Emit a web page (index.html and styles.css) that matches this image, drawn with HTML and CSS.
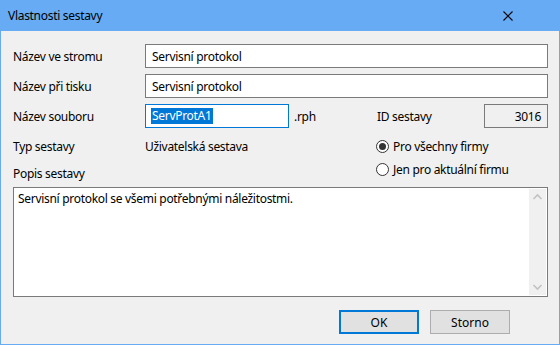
FILE: index.html
```html
<!DOCTYPE html>
<html lang="cs">
<head>
<meta charset="utf-8">
<title>Vlastnosti sestavy</title>
<link rel="stylesheet" href="styles.css">
</head>
<body>
<div class="window">
  <div class="titlebar">
    <span class="title">Vlastnosti sestavy</span>
    <svg class="close" width="12" height="12" viewBox="0 0 12 12"><path d="M1.5 1.5 L10.5 10.5 M10.5 1.5 L1.5 10.5" stroke="#000" stroke-width="1.1" fill="none"/></svg>
  </div>
  <div class="content">
    <div class="row">
      <span class="label">Název ve stromu</span>
      <div class="field wide">Servisní protokol</div>
    </div>
    <div class="row">
      <span class="label">Název při tisku</span>
      <div class="field wide">Servisní protokol</div>
    </div>
    <div class="row">
      <span class="label">Název souboru</span>
      <div class="field file focused"><span class="sel">ServProtA1</span></div>
      <span class="ext">.rph</span>
      <span class="idlabel">ID sestavy</span>
      <div class="idbox">3016</div>
    </div>
    <div class="lower">
      <span class="label">Typ sestavy</span>
      <span class="value">Uživatelská sestava</span>
      <label class="radio"><span class="circle checked"></span>Pro všechny firmy</label>
      <span class="label popis">Popis sestavy</span>
      <span></span>
      <label class="radio"><span class="circle"></span>Jen pro aktuální firmu</label>
    </div>
    <div class="memo">
      <div class="memo-text">Servisní protokol se všemi potřebnými náležitostmi.</div>
      <div class="scrollbar">
        <svg width="17" height="17" viewBox="0 0 17 17"><path d="M4.5 10 L8.5 6 L12.5 10" stroke="#c2c2c2" stroke-width="1.6" fill="none"/></svg>
        <svg width="17" height="17" viewBox="0 0 17 17"><path d="M4.5 7 L8.5 11 L12.5 7" stroke="#c2c2c2" stroke-width="1.6" fill="none"/></svg>
      </div>
    </div>
    <div class="buttons">
      <button class="btn default">OK</button>
      <button class="btn">Storno</button>
    </div>
  </div>
</div>
</body>
</html>
```

FILE: styles.css
```css
* { box-sizing: border-box; }
html, body { margin: 0; padding: 0; }
body {
  font-family: "Noto Sans", "Open Sans", sans-serif;
  font-size: 12px;
  letter-spacing: -0.3px;
  color: #000;
  background: #f0f0f0;
}
.window {
  width: 560px;
  height: 345px;
  border: 1px solid #67abf5;
  border-top: none;
  background: #f0f0f0;
  display: flex;
  flex-direction: column;
}
.titlebar {
  height: 31px;
  margin: 0 -1px;
  background: #67abf5;
  display: flex;
  align-items: center;
  justify-content: space-between;
  padding: 0 46px 0 8px;
}
.title { font-size: 12px; }
.close { display: block; }
.content {
  flex: 1;
  padding: 13px 11px 0 12px;
  display: flex;
  flex-direction: column;
}
.row {
  display: flex;
  align-items: center;
  height: 24px;
  margin-bottom: 6px;
}
.label { width: 132px; flex: none; }
.field {
  height: 24px;
  border: 1px solid #7a7a7a;
  background: #fff;
  padding: 0 6px;
  display: flex;
  align-items: center;
  white-space: nowrap;
}
.field.wide { flex: 1; }
.field.file { width: 144px; flex: none; padding-left: 5px; }
.field.focused { border-color: #0078d7; }
.sel { background: #0078d7; color: #fff; padding: 0 1px; line-height: 16px; }
.ext { margin-left: 5px; width: 83px; }
.idlabel { flex: 1; }
.idbox {
  width: 64px;
  height: 24px;
  border: 1px solid #7a7a7a;
  background: #f0f0f0;
  display: flex;
  align-items: center;
  justify-content: flex-end;
  padding-right: 6px;
}
.lower {
  display: grid;
  grid-template-columns: 132px 231px 1fr;
  grid-template-rows: 20px 20px;
  row-gap: 3px;
  margin-top: 2px;
  align-items: center;
}
.popis { padding-top: 8px; }
.radio { display: flex; align-items: center; gap: 4px; }
.circle {
  width: 13px;
  height: 13px;
  border: 1px solid #333;
  border-radius: 50%;
  background: #fff;
  display: flex;
  align-items: center;
  justify-content: center;
}
.circle.checked::after {
  content: "";
  width: 7px;
  height: 7px;
  border-radius: 50%;
  background: #333;
}
.memo {
  margin-top: 8px;
  height: 110px;
  border: 1px solid #7a7a7a;
  background: #fff;
  display: flex;
}
.memo-text { flex: 1; padding: 2px 4px; }
.scrollbar {
  width: 17px;
  margin: 1px 1px 1px 0;
  background: #f0f0f0;
  display: flex;
  flex-direction: column;
  justify-content: space-between;
}
.scrollbar svg { display: block; }
.buttons {
  display: flex;
  justify-content: flex-end;
  gap: 11px;
  margin-top: 13px;
  padding-right: 38px;
}
.btn {
  width: 80px;
  height: 24px;
  font: inherit;
  color: #000;
  background: #e1e1e1;
  border: 1px solid #adadad;
  padding: 0;
}
.btn.default { border: 2px solid #0078d7; }
```
